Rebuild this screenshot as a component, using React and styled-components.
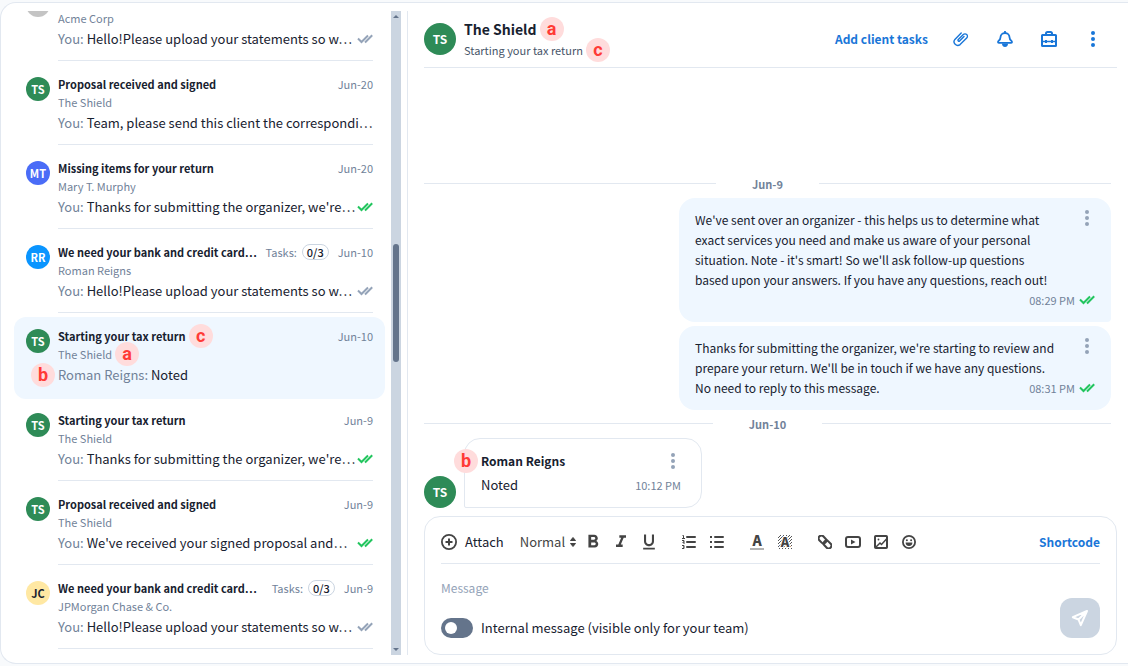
import React from 'react';
import styled, { createGlobalStyle } from 'styled-components';
import { MdFormatBold, MdFormatItalic, MdFormatUnderlined } from 'react-icons/md';

const GlobalStyle = createGlobalStyle`
  *, *::before, *::after {
    box-sizing: border-box;
  }
  body {
    margin: 0;
    background: #f8fafc;
    color: #17212f;
    font-family: "Noto Sans CJK SC", "Noto Sans", sans-serif;
    font-size: 13px;
    line-height: 20px;
  }
  h1, h2, h3, p, ul {
    margin: 0;
    padding: 0;
    font-weight: 400;
  }
  button, select, textarea, input {
    font: inherit;
    color: inherit;
    margin: 0;
    padding: 0;
    border: 0;
    background: none;
  }
  svg {
    display: block;
    flex: none;
  }
`;

const Page = styled.div`
  display: flex;
  height: 100vh;
  padding: 2px 0;
`;
const Panel = styled.main`
  display: flex;
  flex: 1;
  min-width: 0;
  padding: 8px 0;
  background: #fff;
  border: 1px solid #e2e8f0;
  border-width: 1px 0 1px 1px;
  border-radius: 16px 0 0 16px;
`;

/* Thread list */
const Sidebar = styled.aside`
  display: flex;
  flex: none;
  width: 407px;
  padding-right: 6px;
  border-right: 1px solid #e2e8f0;
`;
const ThreadList = styled.ul`
  display: flex;
  flex-direction: column;
  justify-content: flex-end;
  flex: 1;
  min-width: 0;
  gap: 2px;
  padding: 0 6px 4px 13px;
  overflow: hidden;
  list-style: none;
`;
const Thread = styled.li`
  display: flex;
  flex: none;
  gap: 8px;
  height: 82px;
  padding: 10px 12px 2px;
  border-radius: 12px;
  background: ${props => props.$active ? '#eff7ff' : 'transparent'};
`;
const ThreadBody = styled.div`
  flex: 1;
  min-width: 0;
  border-bottom: 1px solid ${props => props.$active ? 'transparent' : '#e2e8f0'};
`;
const ThreadTop = styled.div`
  display: flex;
  align-items: center;
  height: 18px;
  color: #718299;
  font-size: 11px;
  white-space: nowrap;
`;
const ThreadTitle = styled.h3`
  position: relative;
  color: #17212f;
  font-size: 11px;
  font-weight: 700;
  line-height: 18px;
`;
const ThreadInfo = styled.div`
  display: flex;
  align-items: center;
  gap: 9px;
  margin-left: auto;
`;
const Tasks = styled.span`
  display: flex;
  align-items: center;
  gap: 5px;
`;
const TaskCount = styled.span`
  height: 16px;
  padding: 0 4px;
  border: 1px solid #cbd5e1;
  border-radius: 8px;
  color: #17212f;
  font-weight: 500;
  line-height: 14px;
`;
const ThreadClient = styled.p`
  color: #718299;
  font-size: 11px;
  line-height: 18px;
`;
const ThreadPreview = styled.div`
  display: flex;
  align-items: center;
  justify-content: space-between;
  height: 24px;
  white-space: nowrap;
`;
const Author = styled.span`
  position: relative;
  color: #718299;
`;
const Anchor = styled.span`
  position: relative;
`;
const Avatar = styled.span`
  display: flex;
  align-items: center;
  justify-content: center;
  flex: none;
  width: ${props => props.$large ? '32px' : '24px'};
  height: ${props => props.$large ? '32px' : '24px'};
  margin-top: ${props => props.$large ? '0' : '2px'};
  border-radius: 50%;
  background: ${props => props.$color};
  color: ${props => props.$dark ? '#17212f' : '#fff'};
  font-size: ${props => props.$large ? '12px' : '11px'};
  font-weight: 700;
`;
const Marker = styled.span`
  position: absolute;
  z-index: 1;
  top: 50%;
  ${props => props.$before ? 'right' : 'left'}: calc(100% + 3px);
  width: 24px;
  height: 24px;
  margin-top: -12px;
  border-radius: 50%;
  background: #ffdcdc;
  color: #ff3b36;
  font-family: Roboto, sans-serif;
  font-size: 18px;
  font-weight: 700;
  line-height: 24px;
  text-align: center;
`;

const Scrollbar = styled.div`
  display: flex;
  flex-direction: column;
  align-items: center;
  flex: none;
  width: 10px;
  padding: 4px 0;
  background: #cbd5e1;
`;
const Track = styled.div`
  display: flex;
  flex-direction: column;
  flex: 1;
  width: 6px;
  &::before {
    content: '';
    flex: 226;
  }
  &::after {
    content: '';
    flex: 286;
  }
`;
const Thumb = styled.div`
  flex: 118;
  border-radius: 3px;
  background: #64748b;
`;

/* Conversation */
const Chat = styled.section`
  display: flex;
  flex-direction: column;
  flex: 1;
  min-width: 0;
  padding: 0 11px 0 16px;
`;
const ChatHeader = styled.header`
  display: flex;
  align-items: center;
  gap: 8px;
  height: 57px;
  border-bottom: 1px solid #e2e8f0;
`;
const ChatNames = styled.div`
  display: flex;
  flex-direction: column;
  align-items: flex-start;
  flex: 1;
`;
const ChatTitle = styled.h1`
  position: relative;
  font-size: 14px;
  font-weight: 700;
  line-height: 22px;
`;
const ChatSubject = styled.p`
  position: relative;
  color: #475569;
  font-size: 11px;
  line-height: 20px;
`;
const LinkButton = styled.button`
  color: #1976d8;
  font-size: 12px;
  font-weight: 700;
  cursor: pointer;
`;
const HeaderActions = styled.div`
  display: flex;
  align-items: center;
  margin: 0 2px 0 3px;
  color: #1976d8;
`;
const HeaderButton = styled.button`
  display: flex;
  align-items: center;
  justify-content: center;
  width: 44px;
  height: 32px;
  cursor: pointer;
`;
const Messages = styled.div`
  display: flex;
  flex-direction: column;
  justify-content: flex-end;
  flex: 1;
  min-height: 0;
  padding: 0 6px 8px 0;
  overflow: hidden;
`;
const DateLine = styled.div`
  display: flex;
  align-items: center;
  height: 28px;
  padding-bottom: 1px;
  color: #718299;
  font-size: 11px;
  font-weight: 700;
  &::before, &::after {
    content: '';
    flex: 1;
    height: 1px;
    background: #e2e8f0;
  }
`;
const DateText = styled.time`
  padding: 0 36px;
`;
const Bubble = styled.article`
  display: grid;
  grid-template-columns: 364px 1fr;
  align-self: flex-end;
  width: 432px;
  max-width: 100%;
  margin-bottom: ${props => props.$joined ? '4px' : '0'};
  padding: 12px 16px;
  border-radius: ${props => props.$joined ? '16px 16px 4px 16px' : '16px'};
  background: #eff7ff;
  font-size: 12px;
`;
const MenuButton = styled.button`
  display: flex;
  justify-self: end;
  justify-content: center;
  width: 16px;
  height: 16px;
  color: #94a3b8;
  cursor: pointer;
`;
const Meta = styled.div`
  display: flex;
  grid-column: 1 / -1;
  justify-self: end;
  align-items: center;
  gap: 4px;
  margin-top: ${props => props.$overlap ? '-20px' : '0'};
  color: #718299;
  font-size: 11px;
`;
const Incoming = styled.div`
  display: flex;
  align-items: flex-end;
  gap: 8px;
`;
const Card = styled.article`
  display: flex;
  flex-direction: column;
  gap: 4px;
  width: 238px;
  padding: 12px 20px 12px 16px;
  border: 1px solid #e2e8f0;
  border-radius: 16px 16px 16px 2px;
`;
const CardRow = styled.div`
  display: flex;
  align-items: center;
  justify-content: space-between;
`;
const Sender = styled.h2`
  position: relative;
  font-size: 12px;
  font-weight: 700;
`;

/* Composer */
const Composer = styled.form`
  display: flex;
  flex-direction: column;
  padding: 4px 16px 16px;
  border: 1px solid #e2e8f0;
  border-radius: 16px;
`;
const Toolbar = styled.div`
  display: flex;
  align-items: center;
  height: 43px;
  border-bottom: 1px solid #e2e8f0;
  color: #444;
`;
const AttachButton = styled.button`
  display: flex;
  align-items: center;
  gap: 8px;
  margin-right: 16px;
  cursor: pointer;
`;
const AttachLabel = styled.span`
  color: #17212f;
`;
const SizePicker = styled.label`
  display: grid;
  align-items: center;
  width: 57px;
  margin-right: 2px;
  > * {
    grid-area: 1 / 1;
  }
  svg {
    justify-self: end;
    pointer-events: none;
  }
`;
const SizeSelect = styled.select`
  width: 100%;
  appearance: none;
`;
const ToolGroup = styled.div`
  display: flex;
  margin-right: 12px;
`;
const Tool = styled.button`
  display: flex;
  align-items: center;
  justify-content: center;
  width: 28px;
  height: 24px;
  cursor: pointer;
`;
const Shortcode = styled(LinkButton)`
  margin-left: auto;
`;
const MessageInput = styled.textarea`
  height: 20px;
  margin-top: 14px;
  resize: none;
  outline: 0;
  overflow: hidden;
  font-size: 12px;
  &::placeholder {
    color: #94a3b8;
    opacity: 1;
  }
`;
const ComposerFooter = styled.div`
  display: flex;
  align-items: flex-end;
  justify-content: space-between;
`;
const SwitchLabel = styled.label`
  display: flex;
  align-items: center;
  gap: 8px;
`;
const Switch = styled.input`
  display: flex;
  appearance: none;
  width: 32px;
  height: 20px;
  padding: 4px;
  border-radius: 10px;
  background: #64748b;
  &::before {
    content: '';
    width: 12px;
    height: 12px;
    border-radius: 50%;
    background: #fff;
  }
  &:checked {
    justify-content: flex-end;
    background: #1976d8;
  }
`;
const SendButton = styled.button`
  display: flex;
  align-items: center;
  justify-content: center;
  width: 40px;
  height: 40px;
  border-radius: 12px;
  background: #cbd5e1;
  color: #fff;
`;

/* Icons */
const ReadIcon = ({ color = '#94a3b8' }) => (
  <svg width="16" height="10" viewBox="0 0 16 10" fill="none" stroke={color} strokeWidth="2">
    <path d="M1 4.5L4.5 8L11 1.5M8 8.5L15.2 1.3" />
  </svg>
);

const DotsIcon = () => (
  <svg width="16" height="16" viewBox="0 0 16 16" fill="currentColor">
    <circle cx="8" cy="2" r="2" />
    <circle cx="8" cy="8" r="2" />
    <circle cx="8" cy="14" r="2" />
  </svg>
);

const ClipIcon = () => (
  <svg width="16" height="16" viewBox="0 0 16 16" fill="none" stroke="currentColor" strokeWidth="1.4" strokeLinecap="round">
    <path d="M11 5.4L6.6 9.900a.9.9 0 0 1-1.300-1.300l5-5a2.400 2.400 0 0 1 3.400 3.400l-6.600 6.600a3.700 3.700 0 0 1-5.200-5.200l6.300-6.400" />
  </svg>
);

const BellIcon = () => (
  <svg width="16" height="16" viewBox="0 0 16 16" fill="none" stroke="currentColor" strokeWidth="1.8" strokeLinejoin="round">
    <path d="M8 2C5.200 2 3.500 4 3.500 6.300c0 2-.8 2.700-1.900 3.600-.9.800-.7 2 .5 2h11.800c1.200 0 1.400-1.200.5-2-1.100-.9-1.900-1.600-1.900-3.600C12.500 4 10.800 2 8 2z" />
    <path d="M5 12.500h6a3 3.400 0 0 1-6 0z" fill="currentColor" stroke="none" />
    <path d="M8 0v2" />
  </svg>
);

const ToolboxIcon = () => (
  <svg width="16" height="16" viewBox="0 0 16 16" fill="none" stroke="currentColor" strokeWidth="2" strokeLinejoin="round">
    <rect x="1" y="4" width="14" height="11" rx="0.5" />
    <path d="M5 4V2.500a1.500 1.500 0 0 1 1.500-1.500h3A1.500 1.500 0 0 1 11 2.500V4" />
    <path d="M1 10.500h14" strokeWidth="1.500" />
    <path d="M5 9v3M11 9v3" />
  </svg>
);

const PlusIcon = () => (
  <svg width="16" height="16" viewBox="0 0 16 16" fill="none" stroke="currentColor" strokeWidth="1.800">
    <circle cx="8" cy="8" r="7.100" />
    <path d="M8 4.500v7M4.500 8h7" strokeWidth="2" />
  </svg>
);

const UpDownIcon = () => (
  <svg width="8" height="12" viewBox="0 0 8 12" fill="currentColor">
    <path d="M1.500 4.500L4 1.500l2.500 3zM1.500 7.500l2.500 3 2.500-3z" stroke="currentColor" strokeLinejoin="round" />
  </svg>
);

const NumberedIcon = () => (
  <svg width="16" height="16" viewBox="0 0 16 16" fill="currentColor">
    <path d="M6 3h8M6 8h8M6 13h8" stroke="currentColor" strokeWidth="2" strokeLinecap="round" />
    <path d="M1.500 1.500h1v3M1 4.500h3M1 6.500h2v1.500h-1v1h2M1 11.500h2v1.500h-1M3 13v1.500H1" fill="none" stroke="currentColor" />
  </svg>
);

const BulletedIcon = () => (
  <svg width="16" height="16" viewBox="0 0 16 16" fill="currentColor">
    <path d="M6 3h8M6 8h8M6 13h8" stroke="currentColor" strokeWidth="2" strokeLinecap="round" />
    <path d="M1 2h2v2H1zM1 7h2v2H1zM1 12h2v2H1z" />
  </svg>
);

const TextColorIcon = () => (
  <svg width="14" height="16" viewBox="0 0 14 16" fill="currentColor">
    <text x="7" y="12" fontSize="14" fontWeight="900" textAnchor="middle">A</text>
    <path d="M0 14h14v2H0z" fill="#b3b3b3" />
  </svg>
);

const HighlightIcon = () => (
  <svg width="14" height="14" viewBox="0 0 14 14" fill="currentColor">
    <defs>
      <pattern id="hatch" width="3" height="3" patternUnits="userSpaceOnUse">
        <path d="M-1 1l2-2M0 3l3-3M2 4l2-2" stroke="#444" strokeWidth="0.900" />
      </pattern>
    </defs>
    <path d="M0 0h14v14H0z" fill="url(#hatch)" />
    <text x="7" y="12" fontSize="13" fontWeight="900" textAnchor="middle" stroke="#fff" strokeWidth="2" paintOrder="stroke">A</text>
  </svg>
);

const ChainIcon = () => (
  <svg width="14" height="14" viewBox="0 0 16 16" fill="none" stroke="currentColor" strokeWidth="2.400">
    <g transform="rotate(45 8 8)">
      <rect x="-1" y="4.800" width="9.800" height="6.400" rx="3" />
      <rect x="7.200" y="4.800" width="9.800" height="6.400" rx="3" />
    </g>
  </svg>
);

const VideoIcon = () => (
  <svg width="16" height="14" viewBox="0 0 16 14" fill="none" stroke="currentColor" strokeWidth="2">
    <rect x="1" y="2" width="14" height="10" rx="2" />
    <path d="M6 4.500v5L10.500 7z" fill="currentColor" stroke="none" />
  </svg>
);

const ImageIcon = () => (
  <svg width="14" height="14" viewBox="0 0 14 14" fill="none" stroke="currentColor" strokeWidth="2">
    <rect x="1" y="1" width="12" height="12" rx="0.800" />
    <path d="M2 12l4-4 1.500 1.500L12.500 4" strokeWidth="1.500" />
    <circle cx="4.500" cy="4.500" r="0.900" fill="currentColor" stroke="none" />
  </svg>
);

const SmileIcon = () => (
  <svg width="14" height="14" viewBox="0 0 14 14" fill="currentColor">
    <circle cx="7" cy="7" r="6.100" fill="none" stroke="currentColor" strokeWidth="1.800" />
    <circle cx="4.900" cy="5.200" r="1" />
    <circle cx="9.100" cy="5.200" r="1" />
    <path d="M3.600 7.500h6.800a3.400 3.400 0 0 1-6.800 0z" />
  </svg>
);

const SendIcon = () => (
  <svg width="18" height="18" viewBox="0 0 18 18" fill="none" stroke="currentColor" strokeWidth="2" strokeLinejoin="round">
    <path d="M16 2L1.800 8.200l5.700 2.300L9.800 16.200zM16 2L7.500 10.500" />
  </svg>
);

const UPLOAD = 'Hello!Please upload your statements so w…';
const BANK = 'We need your bank and credit card…';

const threads = [
  { initials: '', color: '#c4c4c4', title: BANK, client: 'Acme Corp', author: 'You:', text: UPLOAD, date: 'Jun-20', read: '#94a3b8' },
  { initials: 'TS', color: '#2e8b57', title: 'Proposal received and signed', client: 'The Shield', author: 'You:', text: 'Team, please send this client the correspondi…', date: 'Jun-20' },
  { initials: 'MT', color: '#4a6cf7', title: 'Missing items for your return', client: 'Mary T. Murphy', author: 'You:', text: "Thanks for submitting the organizer, we're…", date: 'Jun-20', read: '#22c55e' },
  { initials: 'RR', color: '#0a95ff', title: BANK, client: 'Roman Reigns', author: 'You:', text: UPLOAD, date: 'Jun-10', tasks: '0/3', read: '#94a3b8' },
  { initials: 'TS', color: '#2e8b57', title: 'Starting your tax return', client: 'The Shield', author: 'Roman Reigns:', text: 'Noted', date: 'Jun-10', active: true },
  { initials: 'TS', color: '#2e8b57', title: 'Starting your tax return', client: 'The Shield', author: 'You:', text: "Thanks for submitting the organizer, we're…", date: 'Jun-9', read: '#22c55e' },
  { initials: 'TS', color: '#2e8b57', title: 'Proposal received and signed', client: 'The Shield', author: 'You:', text: "We've received your signed proposal and…", date: 'Jun-9', read: '#22c55e' },
  { initials: 'JC', color: '#ffe8a3', dark: true, title: BANK, client: 'JPMorgan Chase & Co.', author: 'You:', text: UPLOAD, date: 'Jun-9', tasks: '0/3', read: '#94a3b8' },
];

const ThreadItem = ({ thread }) => (
  <Thread $active={ thread.active }>
    <Avatar $color={ thread.color } $dark={ thread.dark }>{ thread.initials }</Avatar>
    <ThreadBody $active={ thread.active }>
      <ThreadTop>
        <ThreadTitle>
          { thread.title }
          { thread.active && <Marker>c</Marker> }
        </ThreadTitle>
        <ThreadInfo>
          { thread.tasks && <Tasks>Tasks: <TaskCount>{ thread.tasks }</TaskCount></Tasks> }
          <time>{ thread.date }</time>
        </ThreadInfo>
      </ThreadTop>
      <ThreadClient>
        <Anchor>
          { thread.client }
          { thread.active && <Marker>a</Marker> }
        </Anchor>
      </ThreadClient>
      <ThreadPreview>
        <span>
          <Author>
            { thread.author }
            { thread.active && <Marker $before>b</Marker> }
          </Author>
          {' '}{ thread.text }
        </span>
        { thread.read && <ReadIcon color={ thread.read } /> }
      </ThreadPreview>
    </ThreadBody>
  </Thread>
);

const App = () => (
  <>
    <GlobalStyle />
    <Page>
      <Panel>
        <Sidebar>
          <ThreadList>
            { threads.map((thread, i) => <ThreadItem key={i} thread={ thread } />) }
          </ThreadList>
          <Scrollbar aria-hidden="true">
            <svg width="6" height="3" viewBox="0 0 6 3" fill="#64748b"><path d="M0 3l3-3 3 3z" /></svg>
            <Track><Thumb /></Track>
            <svg width="6" height="3" viewBox="0 0 6 3" fill="#64748b"><path d="M0 0l3 3 3-3z" /></svg>
          </Scrollbar>
        </Sidebar>
        <Chat>
          <ChatHeader>
            <Avatar $large $color="#2e8b57">TS</Avatar>
            <ChatNames>
              <ChatTitle>The Shield<Marker>a</Marker></ChatTitle>
              <ChatSubject>Starting your tax return<Marker>c</Marker></ChatSubject>
            </ChatNames>
            <LinkButton type="button">Add client tasks</LinkButton>
            <HeaderActions>
              <HeaderButton type="button" aria-label="Attachments"><ClipIcon /></HeaderButton>
              <HeaderButton type="button" aria-label="Reminders"><BellIcon /></HeaderButton>
              <HeaderButton type="button" aria-label="Jobs"><ToolboxIcon /></HeaderButton>
              <HeaderButton type="button" aria-label="More"><DotsIcon /></HeaderButton>
            </HeaderActions>
          </ChatHeader>
          <Messages>
            <DateLine><DateText>Jun-9</DateText></DateLine>
            <Bubble $joined>
              <p>We've sent over an organizer - this helps us to determine what exact services you need and make us aware of your personal situation. Note - it's smart! So we'll ask follow-up questions based upon your answers. If you have any questions, reach out!</p>
              <MenuButton type="button" aria-label="Message menu"><DotsIcon /></MenuButton>
              <Meta><time>08:29 PM</time><ReadIcon color="#22c55e" /></Meta>
            </Bubble>
            <Bubble>
              <p>Thanks for submitting the organizer, we're starting to review and prepare your return. We'll be in touch if we have any questions. No need to reply to this message.</p>
              <MenuButton type="button" aria-label="Message menu"><DotsIcon /></MenuButton>
              <Meta $overlap><time>08:31 PM</time><ReadIcon color="#22c55e" /></Meta>
            </Bubble>
            <DateLine><DateText>Jun-10</DateText></DateLine>
            <Incoming>
              <Avatar $large $color="#2e8b57">TS</Avatar>
              <Card>
                <CardRow>
                  <Sender>Roman Reigns<Marker $before>b</Marker></Sender>
                  <MenuButton type="button" aria-label="Message menu"><DotsIcon /></MenuButton>
                </CardRow>
                <CardRow>
                  <p>Noted</p>
                  <Meta><time>10:12 PM</time></Meta>
                </CardRow>
              </Card>
            </Incoming>
          </Messages>
          <Composer>
            <Toolbar>
              <AttachButton type="button"><PlusIcon /><AttachLabel>Attach</AttachLabel></AttachButton>
              <SizePicker>
                <SizeSelect aria-label="Text size"><option>Normal</option></SizeSelect>
                <UpDownIcon />
              </SizePicker>
              <ToolGroup>
                <Tool type="button" aria-label="Bold"><MdFormatBold size={22} /></Tool>
                <Tool type="button" aria-label="Italic"><MdFormatItalic size={20} /></Tool>
                <Tool type="button" aria-label="Underline"><MdFormatUnderlined size={20} /></Tool>
              </ToolGroup>
              <ToolGroup>
                <Tool type="button" aria-label="Numbered list"><NumberedIcon /></Tool>
                <Tool type="button" aria-label="Bulleted list"><BulletedIcon /></Tool>
              </ToolGroup>
              <ToolGroup>
                <Tool type="button" aria-label="Text color"><TextColorIcon /></Tool>
                <Tool type="button" aria-label="Highlight"><HighlightIcon /></Tool>
              </ToolGroup>
              <ToolGroup>
                <Tool type="button" aria-label="Link"><ChainIcon /></Tool>
                <Tool type="button" aria-label="Video"><VideoIcon /></Tool>
                <Tool type="button" aria-label="Image"><ImageIcon /></Tool>
                <Tool type="button" aria-label="Emoji"><SmileIcon /></Tool>
              </ToolGroup>
              <Shortcode type="button">Shortcode</Shortcode>
            </Toolbar>
            <MessageInput aria-label="Message" placeholder="Message" />
            <ComposerFooter>
              <SwitchLabel>
                <Switch type="checkbox" role="switch" />
                Internal message (visible only for your team)
              </SwitchLabel>
              <SendButton type="button" aria-label="Send"><SendIcon /></SendButton>
            </ComposerFooter>
          </Composer>
        </Chat>
      </Panel>
    </Page>
  </>
);

export default App;
